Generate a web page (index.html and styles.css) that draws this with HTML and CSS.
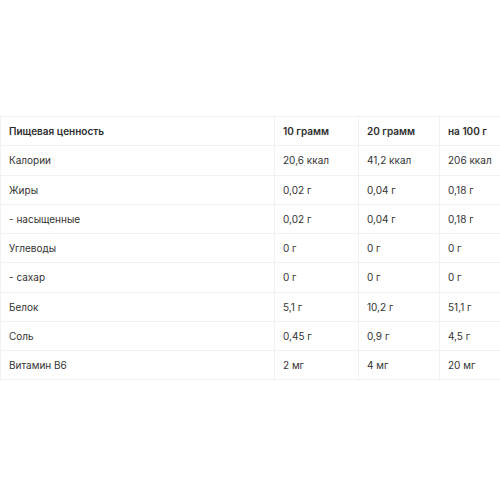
FILE: index.html
```html
<!DOCTYPE html>
<html>
<head>
<meta charset="utf-8">
<link rel="stylesheet" href="styles.css">
</head>
<body>
<table class="nutrition">
  <thead>
    <tr><th class="c1">Пищевая ценность</th><th class="c2">10 грамм</th><th class="c3">20 грамм</th><th class="c4">на 100 г</th></tr>
  </thead>
  <tbody>
    <tr><td>Калории</td><td>20,6 ккал</td><td>41,2 ккал</td><td>206 ккал</td></tr>
    <tr><td>Жиры</td><td>0,02 г</td><td>0,04 г</td><td>0,18 г</td></tr>
    <tr><td>- насыщенные</td><td>0,02 г</td><td>0,04 г</td><td>0,18 г</td></tr>
    <tr><td>Углеводы</td><td>0 г</td><td>0 г</td><td>0 г</td></tr>
    <tr><td>- сахар</td><td>0 г</td><td>0 г</td><td>0 г</td></tr>
    <tr><td>Белок</td><td>5,1 г</td><td>10,2 г</td><td>51,1 г</td></tr>
    <tr><td>Соль</td><td>0,45 г</td><td>0,9 г</td><td>4,5 г</td></tr>
    <tr><td>Витамин B6</td><td>2 мг</td><td>4 мг</td><td>20 мг</td></tr>
  </tbody>
</table>
</body>
</html>
```
FILE: styles.css
```css
html, body {
  margin: 0;
  padding: 0;
  background: #ffffff;
}
body {
  font-family: Inter, "Noto Sans", sans-serif;
  font-size: 10px;
  color: #333333;
  padding-top: 116px;
}
.nutrition {
  border-collapse: collapse;
  width: 500px;
  table-layout: fixed;
}
.nutrition th, .nutrition td {
  box-sizing: border-box;
  border: 1px solid #f0f2f2;
  padding: 0 8px;
  height: 29.25px;
  text-align: left;
  vertical-align: middle;
  white-space: nowrap;
}
.nutrition th {
  font-weight: 600;
  color: #2e2e2e;
}
.nutrition tr > :last-child {
  border-right: none;
}
.c1 { width: 274px; }
.c2 { width: 84px; }
.c3 { width: 81px; }
.c4 { width: 61px; }
```
